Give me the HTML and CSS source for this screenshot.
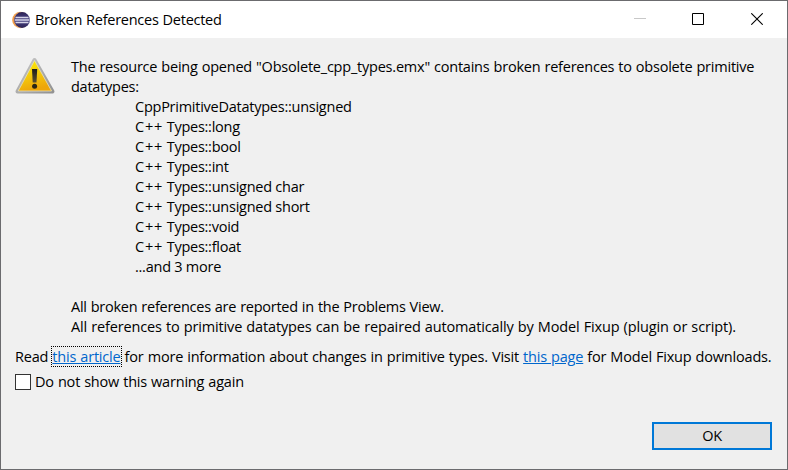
FILE: index.html
```html
<!DOCTYPE html>
<html lang="en">
<head>
  <meta charset="UTF-8" />
  <title>Broken References Detected</title>
  <link rel="stylesheet" href="styles.css">
</head>
<body>

  <div class="dialog">
    <header>
      <svg class="app-icon" width="18" height="18" viewBox="0 0 18 18">
        <defs>
          <linearGradient id="ring" x1="0" y1="0" x2="1" y2="0">
            <stop offset="0" stop-color="#f0963c" />
            <stop offset="1" stop-color="#fbd9b0" />
          </linearGradient>
          <linearGradient id="globe" x1="0" y1="0" x2="0" y2="1">
            <stop offset="0" stop-color="#2c2255" />
            <stop offset=".5" stop-color="#4b4687" />
            <stop offset="1" stop-color="#2c2255" />
          </linearGradient>
        </defs>
        <circle cx="8.4" cy="9" r="8.2" fill="url(#ring)" />
        <circle cx="10" cy="9" r="7.900" fill="url(#globe)" />
        <path d="M3.500 6.500h13M2.800 9h14.600M3.500 11.500h13" stroke="#d5d3e6" stroke-width="1.300" />
      </svg>
      <h1>Broken References Detected</h1>
      <div class="controls">
        <svg class="minimize" width="12" height="12" viewBox="0 0 12 12"><path d="M0 5.5h12" stroke="#c8c8c8" /></svg>
        <svg width="12" height="12" viewBox="0 0 12 12"><path d="M.5.5h11v11H.5z" fill="none" stroke="#000" /></svg>
        <svg width="12" height="12" viewBox="0 0 12 12"><path d="M.3.3l11.4 11.4M11.7.3L.3 11.7" stroke="#000" stroke-width="1.1" /></svg>
      </div>
    </header>

    <main>
      <div class="message">
        <svg class="warning" width="42" height="38" viewBox="0 0 42 38">
          <defs>
            <linearGradient id="frame" x1="0" y1="0" x2="1" y2="1">
              <stop offset="0" stop-color="#c9c9c9" />
              <stop offset="1" stop-color="#929292" />
            </linearGradient>
            <linearGradient id="fill" x1="0" y1="0" x2=".3" y2="1">
              <stop offset="0" stop-color="#fff200" />
              <stop offset=".5" stop-color="#f5cf0c" />
              <stop offset="1" stop-color="#eda60a" />
            </linearGradient>
            <linearGradient id="mark" x1="0" y1="0" x2="0" y2="1">
              <stop offset="0" stop-color="#1c1c1c" />
              <stop offset="1" stop-color="#5a5030" />
            </linearGradient>
          </defs>
          <path d="M19.500 3L37.500 34.500H2.500z" fill="url(#frame)" stroke="url(#frame)" stroke-width="4" stroke-linejoin="round" />
          <path d="M19.500 3.500L36.600 34H3.200z" fill="url(#fill)" stroke="#e4e0c0" stroke-width=".8" stroke-linejoin="round" />
          <path d="M17 12h5.200l-.7 13.500h-3.800z" fill="url(#mark)" />
          <circle cx="19.600" cy="29.300" r="2.500" fill="#2b2614" />
        </svg>
        <div class="text">
          <p class="intro">The resource being opened "Obsolete_cpp_types.emx" contains broken references to obsolete primitive</p>
          <p>datatypes:</p>
          <ul>
            <li>CppPrimitiveDatatypes::unsigned</li>
            <li><span class="lang">C++</span> Types::long</li>
            <li><span class="lang">C++</span> Types::bool</li>
            <li><span class="lang">C++</span> Types::int</li>
            <li><span class="lang">C++</span> Types::unsigned char</li>
            <li><span class="lang">C++</span> Types::unsigned short</li>
            <li><span class="lang">C++</span> Types::void</li>
            <li><span class="lang">C++</span> Types::float</li>
            <li>...and 3 more</li>
          </ul>
          <p>All broken references are reported in the Problems View.</p>
          <p class="repair">All references to primitive datatypes can be repaired automatically by Model Fixup (plugin or script).</p>
        </div>
      </div>

      <p class="links">Read <a class="focused" href="#">this article</a> for more information about changes in primitive types. Visit <a href="#">this page</a> for Model Fixup downloads.</p>

      <label class="option"><input type="checkbox"><span>Do not show this warning again</span></label>

      <div class="buttons">
        <button>OK</button>
      </div>
    </main>
  </div>

</body>
</html>
```
FILE: styles.css
```css
* {
  box-sizing: border-box;
}

body {
  margin: 0;
  font-family: 'Segoe UI', 'Open Sans', sans-serif;
  font-size: 14.5px;
  line-height: 20px;
  letter-spacing: -0.26px;
  word-spacing: 0.5px;
  color: #000;
}

h1, p, ul {
  margin: 0;
  padding: 0;
  white-space: nowrap;
}

.dialog {
  width: 788px;
  height: 470px;
  background: #f0f0f0;
  border: 1px solid #6b6b6e;
  overflow: hidden;
}

header {
  display: flex;
  align-items: center;
  height: 37px;
  padding: 0 24px 0 11px;
  background: #fff;
}

h1 {
  margin-left: 5px;
  font-size: 14.5px;
  font-weight: normal;
}

.controls {
  display: flex;
  gap: 47px;
  margin-left: auto;
  margin-bottom: 1px;
}

.minimize {
  margin-right: -1px;
}

main {
  padding: 19px 14px 0;
}

.message {
  display: flex;
}

.warning {
  flex: none;
  margin-right: 14px;
}

ul {
  list-style: none;
  padding-left: 64px;
  margin-bottom: 20px;
}

li {
  letter-spacing: -0.25px;
  word-spacing: 0;
}

.lang {
  letter-spacing: 0.8px;
}

.intro {
  letter-spacing: -0.22px;
}

.repair {
  letter-spacing: -0.14px;
}

.links {
  margin-top: 10px;
  letter-spacing: -0.19px;
}

a {
  color: #0066cc;
}

.focused {
  outline: 1px dotted #000;
}

.option {
  display: flex;
  align-items: center;
  margin-top: 5px;
  letter-spacing: -0.2px;
}

.option input {
  appearance: none;
  width: 16px;
  height: 16px;
  margin: 0 4px 0 0;
  background: #fff;
  border: 1px solid #333;
}

.buttons {
  display: flex;
  justify-content: flex-end;
  margin-top: 30px;
  padding-right: 1px;
}

button {
  width: 120px;
  height: 28px;
  padding: 0;
  font: inherit;
  letter-spacing: inherit;
  color: #000;
  background: #e1e1e1;
  border: 2px solid #0078d7;
}
```
